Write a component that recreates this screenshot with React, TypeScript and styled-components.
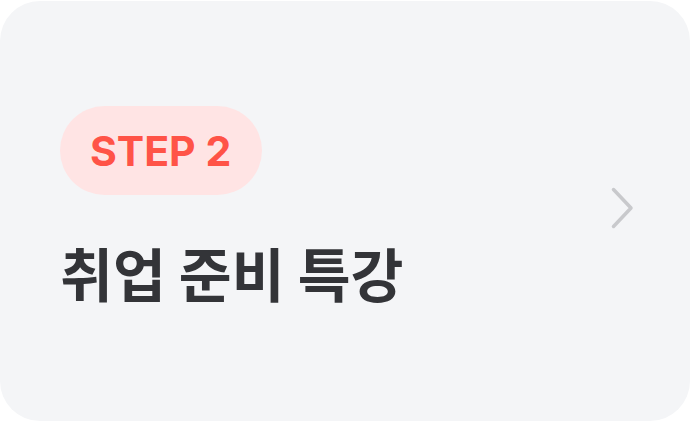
import React from "react";
import styled, { createGlobalStyle } from "styled-components";

const Global = createGlobalStyle`
  html, body { margin: 0; padding: 0; background: #ffffff; }
  body { font-family: Inter, "Noto Sans CJK KR", sans-serif; }
`;

const Card = styled.div`
  box-sizing: border-box;
  width: 690px;
  height: 420px;
  margin-top: 1px;
  border-radius: 40px;
  background: #f4f5f7;
  display: flex;
  align-items: center;
  justify-content: space-between;
  padding: 0 56px 0 60px;
`;

const Content = styled.div`
  align-self: flex-start;
  margin-top: 105px;
  display: flex;
  flex-direction: column;
  align-items: flex-start;
  gap: 43px;
`;

const Badge = styled.div`
  box-sizing: border-box;
  height: 89px;
  padding: 0 31px 0 30px;
  border-radius: 45px;
  background: #ffe4e4;
  color: #ff5347;
  font-family: Inter, sans-serif;
  font-weight: 700;
  font-size: 41px;
  display: flex;
  align-items: center;
`;

const Title = styled.h1`
  margin: 0;
  font-family: "Noto Sans CJK KR", sans-serif;
  font-weight: 700;
  font-size: 57.5px;
  line-height: 1.2;
  color: #333438;
`;

const Chevron = styled.svg`
  flex: none;
  width: 24px;
  height: 44px;
  margin-top: -7px;
`;

export default function App() {
  return (
    <>
      <Global />
      <Card>
        <Content>
          <Badge>STEP 2</Badge>
          <Title>취업 준비 특강</Title>
        </Content>
        <Chevron viewBox="0 0 24 44">
          <path d="M3.5 3.5 L21 22 L3.5 40.5" fill="none" stroke="#c8c9cc" strokeWidth="3.5" strokeLinecap="round" strokeLinejoin="round" />
        </Chevron>
      </Card>
    </>
  );
}
